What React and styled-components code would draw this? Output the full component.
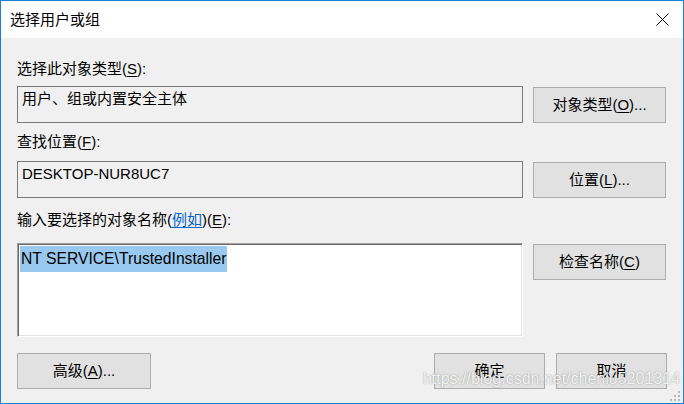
import React from "react";
import styled, { createGlobalStyle } from "styled-components";

const GlobalStyle = createGlobalStyle`
  html, body { margin: 0; padding: 0; background: #ffffff; }
  body {
    font-family: "Liberation Sans", "Noto Sans CJK SC", sans-serif;
    font-size: 15px;
    color: #000;
  }
  * { box-sizing: border-box; }
`;

const Window = styled.div`
  position: relative;
  width: 684px;
  height: 404px;
  border: 1px solid #1b80d6;
  display: flex;
  flex-direction: column;
  overflow: hidden;
  background: #f0f0f0;
`;

const TitleBar = styled.div`
  height: 37px;
  flex: none;
  background: #ffffff;
  display: flex;
  align-items: center;
  justify-content: space-between;
  padding-left: 9px;
`;

const Title = styled.div`
  font-size: 15px;
  line-height: 20px;
  margin-top: 1px;
`;

const CloseButton = styled.div`
  width: 42px;
  height: 37px;
  display: flex;
  align-items: center;
  justify-content: center;
`;

const Body = styled.div`
  flex: 1;
  display: flex;
  flex-direction: column;
  padding: 0 16px 0 16px;
`;

const Label = styled.div`
  line-height: 20px;
  height: 20px;
  margin-top: ${(p) => p.$mt}px;
  white-space: nowrap;
`;

const Mn = styled.span`
  text-decoration: underline;
  text-underline-offset: 2px;
`;

const Link = styled.span`
  color: #0066cc;
  text-decoration: underline;
  text-underline-offset: 2px;
`;

const Row = styled.div`
  display: flex;
  align-items: flex-start;
  gap: 10px;
  margin-top: ${(p) => p.$mt}px;
`;

const ReadOnlyBox = styled.div`
  width: 506px;
  height: 37px;
  border: 1px solid #7a7a7a;
  padding: 2px 4px;
  line-height: 20px;
  white-space: nowrap;
`;

const NameArea = styled.div`
  width: 506px;
  height: 94px;
  background: #ffffff;
  border-style: solid;
  border-width: 1px;
  border-color: #a0a0a0 #ffffff #ffffff #a0a0a0;
  box-shadow: inset 1px 1px 0 #696969, inset -1px -1px 0 #e3e3e3;
  padding: 2px 2px 0 2px;
`;

const Selected = styled.span`
  display: inline-block;
  background: #99c9ef;
  font-size: 15.7px;
  line-height: 26px;
  padding: 0 1px 0 1px;
  white-space: nowrap;
`;

const Button = styled.div`
  width: ${(p) => p.$w || 133}px;
  height: 36px;
  margin-top: ${(p) => p.$mt || 0}px;
  background: #e1e1e1;
  border: 1px solid #adadad;
  display: flex;
  align-items: center;
  justify-content: center;
  line-height: 20px;
  white-space: nowrap;
  flex: none;
`;

const Footer = styled.div`
  display: flex;
  align-items: flex-start;
  margin-top: 16px;
`;

const Spacer = styled.div`
  flex: 1;
`;

const FooterRight = styled.div`
  display: flex;
  gap: 11px;
`;

const Watermark = styled.div`
  position: absolute;
  right: 3px;
  bottom: 14px;
  font-family: "Liberation Sans", sans-serif;
  font-size: 16px;
  line-height: 20px;
  color: rgba(255, 255, 255, 0.9);
  text-shadow: 0 0 1px rgba(90, 90, 90, 0.5), 0 0 2px rgba(120, 120, 120, 0.3);
  white-space: nowrap;
  pointer-events: none;
`;

const Grip = styled.svg`
  position: absolute;
  right: 2px;
  bottom: 1px;
`;

export default function App() {
  return (
    <>
      <GlobalStyle />
      <Window>
        <TitleBar>
          <Title>选择用户或组</Title>
          <CloseButton>
            <svg width="13" height="13" viewBox="0 0 13 13">
              <path d="M0.5 0.5 L12.5 12.5 M12.5 0.5 L0.5 12.5" stroke="#000" strokeWidth="1" fill="none" />
            </svg>
          </CloseButton>
        </TitleBar>
        <Body>
          <Label $mt={21}>
            选择此对象类型(<Mn>S</Mn>):
          </Label>
          <Row $mt={7}>
            <ReadOnlyBox>用户、组或内置安全主体</ReadOnlyBox>
            <Button $mt={1}>
              对象类型(<Mn>O</Mn>)...
            </Button>
          </Row>
          <Label $mt={9}>
            查找位置(<Mn>F</Mn>):
          </Label>
          <Row $mt={9}>
            <ReadOnlyBox>DESKTOP-NUR8UC7</ReadOnlyBox>
            <Button $mt={1}>
              位置(<Mn>L</Mn>)...
            </Button>
          </Row>
          <Label $mt={12}>
            输入要选择的对象名称(<Link>例如</Link>)(<Mn>E</Mn>):
          </Label>
          <Row $mt={13}>
            <NameArea>
              <Selected>NT SERVICE\TrustedInstaller</Selected>
            </NameArea>
            <Button $mt={1}>
              检查名称(<Mn>C</Mn>)
            </Button>
          </Row>
          <Footer>
            <Button $w={134}>
              高级(<Mn>A</Mn>)...
            </Button>
            <Spacer />
            <FooterRight>
              <Button $w={111}>确定</Button>
              <Button $w={111}>取消</Button>
            </FooterRight>
          </Footer>
        </Body>
        <Watermark>https://blog.csdn.net/chenlu5201314</Watermark>
        <Grip width="12" height="12" viewBox="0 0 12 12">
          <rect x="9" y="1" width="2" height="2" fill="#b8b8b8" />
          <rect x="5" y="5" width="2" height="2" fill="#b8b8b8" />
          <rect x="9" y="5" width="2" height="2" fill="#b8b8b8" />
          <rect x="1" y="9" width="2" height="2" fill="#b8b8b8" />
          <rect x="5" y="9" width="2" height="2" fill="#b8b8b8" />
          <rect x="9" y="9" width="2" height="2" fill="#b8b8b8" />
        </Grip>
      </Window>
    </>
  );
}
